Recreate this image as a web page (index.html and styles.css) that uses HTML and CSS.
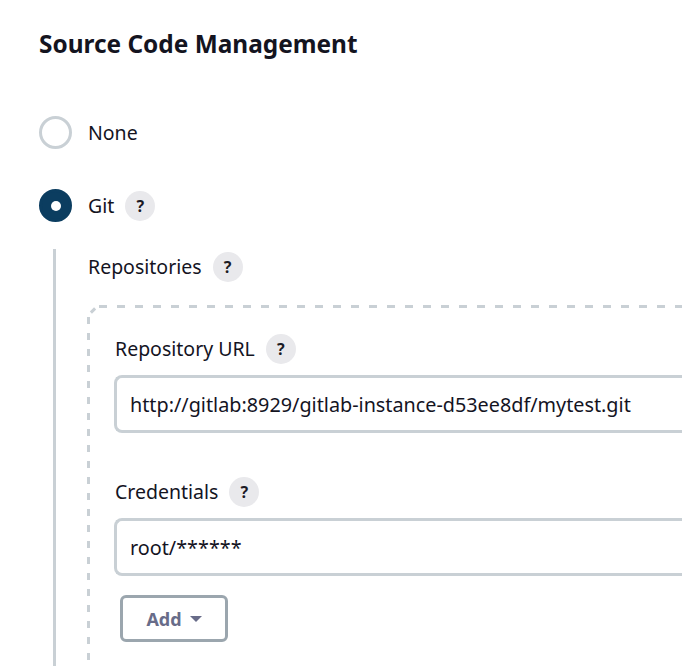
FILE: index.html
```html
<!DOCTYPE html>
<html>
<head>
<meta charset="utf-8">
<link rel="stylesheet" href="styles.css">
</head>
<body>
<div class="page">
  <h2 class="title">Source Code Management</h2>
  <div class="radio-row first">
    <span class="radio"></span>
    <span class="label">None</span>
  </div>
  <div class="radio-row second">
    <span class="radio checked"></span>
    <span class="label">Git</span>
    <span class="help">?</span>
  </div>
  <div class="nested">
    <div class="field-row">
      <span class="label">Repositories</span>
      <span class="help">?</span>
    </div>
    <div class="repo-box">
      <div class="field-row">
        <span class="label">Repository URL</span>
        <span class="help">?</span>
      </div>
      <div class="input">http://gitlab:8929/gitlab-instance-d53ee8df/mytest.git</div>
      <div class="field-row cred">
        <span class="label">Credentials</span>
        <span class="help">?</span>
      </div>
      <div class="input">root/******</div>
      <button class="add-btn">Add <span class="caret"></span></button>
    </div>
  </div>
</div>
</body>
</html>
```

FILE: styles.css
```css
* { box-sizing: border-box; }
html, body { margin: 0; padding: 0; background: #fff; overflow: hidden; }
body {
  font-family: "Noto Sans", "Open Sans", sans-serif;
  color: #14141f;
  width: 682px;
  height: 666px;
}
.page { padding-left: 39px; padding-top: 29px; height: 666px; }
.title {
  margin: 0;
  font-size: 24.4px;
  font-weight: 700;
  line-height: 30px;
  height: 30px;
}
.radio-row {
  display: flex;
  align-items: center;
  height: 33px;
}
.radio-row.first { margin-top: 57px; }
.radio-row.second { margin-top: 40px; }
.radio {
  width: 33px;
  height: 33px;
  border-radius: 50%;
  border: 3px solid #c9d0d5;
  flex: none;
  margin-right: 16px;
  position: relative;
}
.radio.checked {
  background: #0b3d60;
  border-color: #0b3d60;
}
.radio.checked::after {
  content: "";
  position: absolute;
  left: 50%;
  top: 50%;
  width: 10px;
  height: 10px;
  margin: -5px 0 0 -5px;
  border-radius: 50%;
  background: #fff;
}
.label { font-size: 19.5px; line-height: 30px; }
.help {
  width: 30px;
  height: 30px;
  border-radius: 50%;
  background: #e9e9ec;
  display: inline-flex;
  align-items: center;
  justify-content: center;
  font-size: 16px;
  font-weight: 700;
  margin-left: 11px;
  color: #1b1b24;
  flex: none;
}
.nested {
  margin-top: 27px;
  margin-left: 14px;
  border-left: 3px solid #c9d0d5;
  padding-left: 32px;
  padding-top: 3px;
  height: 417px;
}
.field-row {
  display: flex;
  align-items: center;
  height: 30px;
}
.repo-box {
  position: relative;
  margin-top: 23px;
  margin-left: -1px;
  width: 595px;
  height: 361px;
  padding: 29px 0 0 28px;
  background:
    repeating-linear-gradient(to right, #c9d0d5 0 8px, transparent 8px 18px) 12px 0 / calc(100% - 12px) 3px no-repeat,
    repeating-linear-gradient(to bottom, #c9d0d5 0 7px, transparent 7px 16px) 0 12px / 3px calc(100% - 12px) no-repeat;
}
.repo-box::before {
  content: "";
  position: absolute;
  left: 3px;
  top: 4px;
  width: 6px;
  height: 3px;
  background: #c9d0d5;
  transform: rotate(-45deg);
}
.input {
  margin-top: 11px;
  margin-left: -1px;
  height: 58px;
  border: 3px solid #c9d0d5;
  border-right: none;
  border-radius: 8px 0 0 8px;
  padding-left: 13px;
  display: flex;
  align-items: center;
  font-size: 19.8px;
  color: #14141f;
  white-space: nowrap;
  overflow: hidden;
}
.field-row.cred { margin-top: 44px; }
.add-btn {
  margin-top: 19px;
  margin-left: 5px;
  width: 108px;
  height: 47px;
  border: 3px solid #9ba6ae;
  border-radius: 6px;
  background: #fff;
  font-family: inherit;
  font-size: 18px;
  font-weight: 700;
  color: #686c89;
  display: flex;
  align-items: center;
  justify-content: center;
  gap: 8px;
  padding: 0;
}
.caret {
  width: 0;
  height: 0;
  border-left: 6px solid transparent;
  border-right: 6px solid transparent;
  border-top: 6px solid #686c89;
}
```
